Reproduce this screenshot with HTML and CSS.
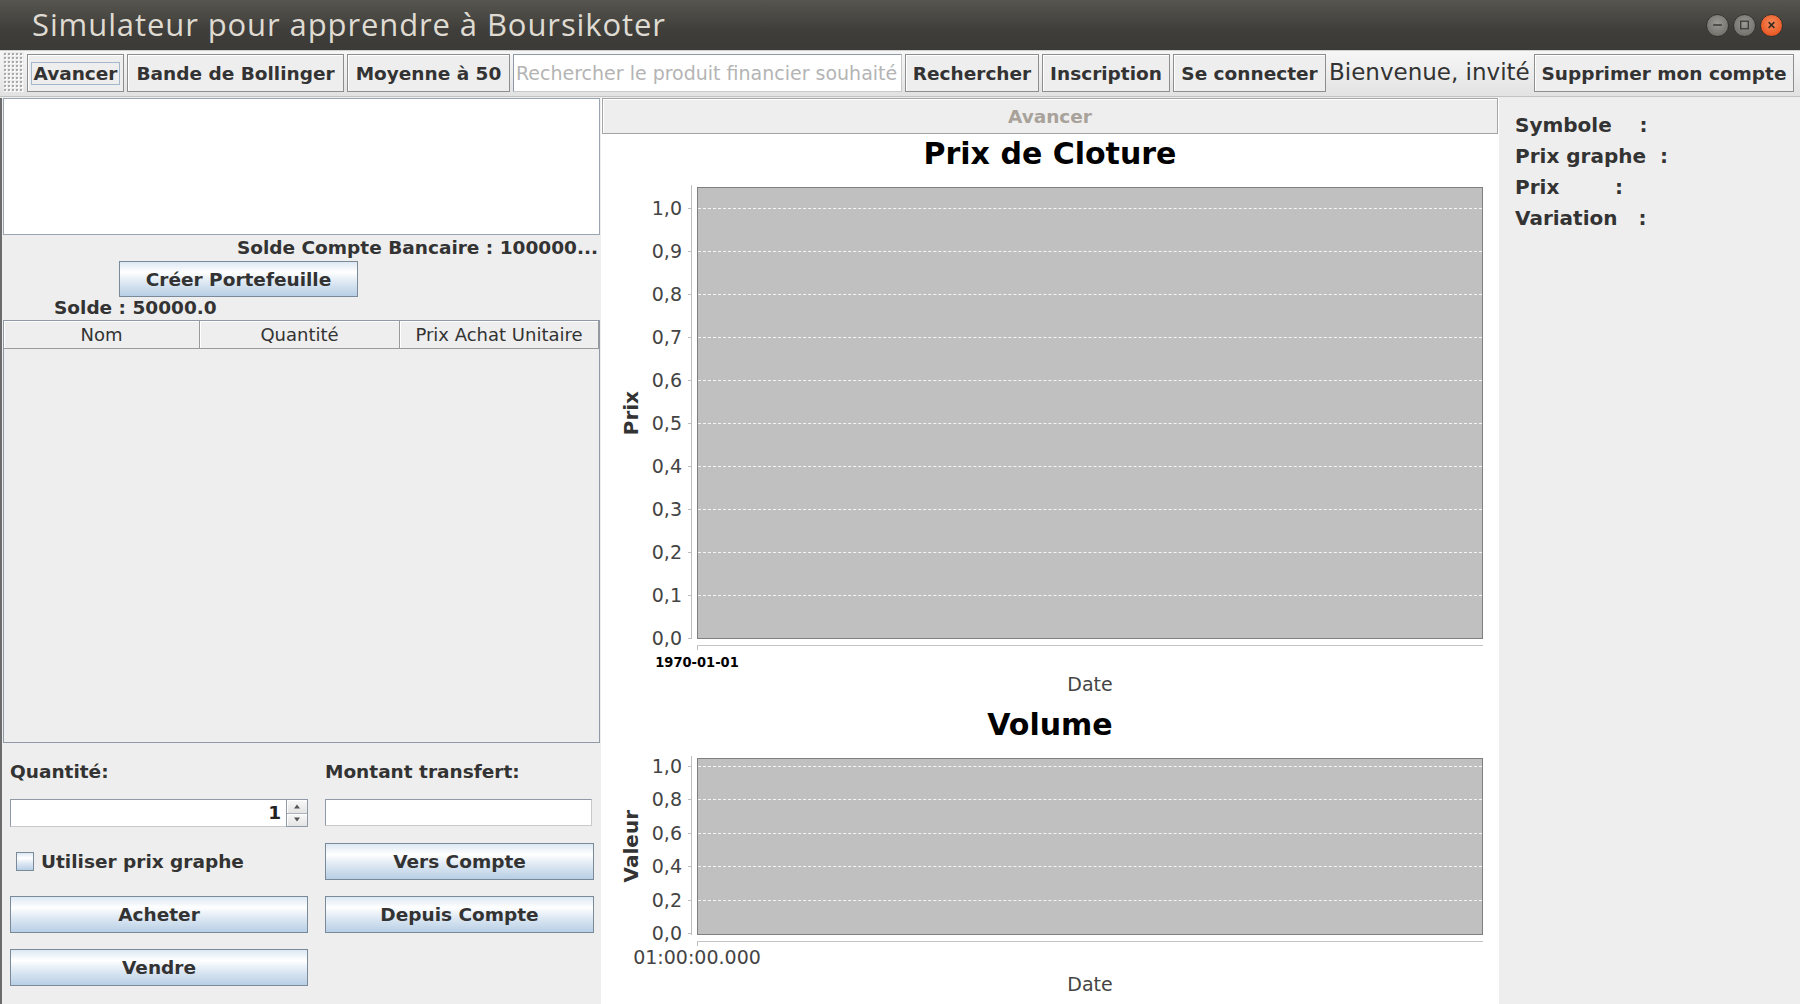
FILE: index.html
```html
<!DOCTYPE html>
<html lang="fr">
<head>
<meta charset="utf-8">
<title>Simulateur pour apprendre à Boursikoter</title>
<link rel="stylesheet" href="styles.css">
</head>
<body>
<div class="window">
  <header class="titlebar">
    <span class="title">Simulateur pour apprendre à Boursikoter</span>
    <div class="wctrls">
      <span class="wbtn wgrey"><svg viewBox="0 0 22 22" width="22" height="22"><path d="M6.5 11h9" stroke="#3a3935" stroke-width="1.6"/></svg></span>
      <span class="wbtn wgrey"><svg viewBox="0 0 22 22" width="22" height="22"><rect x="7" y="7" width="8" height="8" fill="none" stroke="#3a3935" stroke-width="1.3"/></svg></span>
      <span class="wbtn wclose"><svg viewBox="0 0 22 22" width="22" height="22"><path d="M8 8l6 6M14 8l-6 6" stroke="#3a2a20" stroke-width="1.6"/></svg></span>
    </div>
  </header>

  <nav class="toolbar">
    <span class="grip"></span>
    <button class="tb tb-avancer"><span class="focus">Avancer</span></button>
    <button class="tb tb-boll">Bande de Bollinger</button>
    <button class="tb tb-moy">Moyenne à 50</button>
    <input class="search" type="text" placeholder="Rechercher le produit financier souhaité">
    <button class="tb tb-rech">Rechercher</button>
    <button class="tb tb-insc">Inscription</button>
    <button class="tb tb-conn">Se connecter</button>
    <span class="welcome">Bienvenue, invité</span>
    <button class="tb tb-supp">Supprimer mon compte</button>
  </nav>

  <main class="main">
    <section class="left">
      <div class="notes"></div>
      <div class="bank">Solde Compte Bancaire : 100000...</div>
      <div class="create-row"><button class="mbtn create">Créer Portefeuille</button></div>
      <div class="solde">Solde : 50000.0</div>
      <div class="table">
        <div class="thead">
          <span class="th">Nom</span>
          <span class="th">Quantité</span>
          <span class="th">Prix Achat Unitaire</span>
        </div>
      </div>
      <div class="form">
        <span class="flabel">Quantité:</span>
        <span class="flabel">Montant transfert:</span>
        <div class="spinner">
          <span class="spin-field">1</span>
          <span class="spin-btns">
            <span class="spin-b"><svg viewBox="0 0 8 5" width="8" height="5"><path d="M4 0.5L7 4.5H1z" fill="#555"/></svg></span>
            <span class="spin-b"><svg viewBox="0 0 8 5" width="8" height="5"><path d="M4 4.5L7 0.5H1z" fill="#555"/></svg></span>
          </span>
        </div>
        <input class="tfield" type="text">
        <label class="check"><span class="box"></span>Utiliser prix graphe</label>
        <button class="mbtn">Vers Compte</button>
        <button class="mbtn">Acheter</button>
        <button class="mbtn">Depuis Compte</button>
        <button class="mbtn">Vendre</button>
      </div>
    </section>

    <section class="center">
      <button class="adv" disabled>Avancer</button>
      <div class="chart">
        <div class="chart-section">
          <div class="chart-title">Prix de Cloture</div>
          <div class="plot-row">
            <div class="yaxis"><span class="ylabel">Prix</span></div>
            <div class="plot plot-price">
              <span class="gridline" style="top:407px"></span>
              <span class="gridline" style="top:364px"></span>
              <span class="gridline" style="top:321px"></span>
              <span class="gridline" style="top:278px"></span>
              <span class="gridline" style="top:235px"></span>
              <span class="gridline" style="top:192px"></span>
              <span class="gridline" style="top:149px"></span>
              <span class="gridline" style="top:106px"></span>
              <span class="gridline" style="top:63px"></span>
              <span class="gridline" style="top:20px"></span>
              <span class="ytick" style="top:450px">0,0</span>
              <span class="ytick" style="top:407px">0,1</span>
              <span class="ytick" style="top:364px">0,2</span>
              <span class="ytick" style="top:321px">0,3</span>
              <span class="ytick" style="top:278px">0,4</span>
              <span class="ytick" style="top:235px">0,5</span>
              <span class="ytick" style="top:192px">0,6</span>
              <span class="ytick" style="top:149px">0,7</span>
              <span class="ytick" style="top:106px">0,8</span>
              <span class="ytick" style="top:63px">0,9</span>
              <span class="ytick" style="top:20px">1,0</span>
            </div>
          </div>
          <div class="xaxis xaxis-price"><span class="xtick xtick-date">1970-01-01</span></div>
          <div class="xtitle">Date</div>
        </div>

        <div class="chart-section second">
          <div class="chart-title">Volume</div>
          <div class="plot-row">
            <div class="yaxis"><span class="ylabel">Valeur</span></div>
            <div class="plot plot-volume">
              <span class="gridline" style="top:141px"></span>
              <span class="gridline" style="top:107px"></span>
              <span class="gridline" style="top:74px"></span>
              <span class="gridline" style="top:40px"></span>
              <span class="gridline" style="top:7px"></span>
              <span class="ytick" style="top:174px">0,0</span>
              <span class="ytick" style="top:141px">0,2</span>
              <span class="ytick" style="top:107px">0,4</span>
              <span class="ytick" style="top:74px">0,6</span>
              <span class="ytick" style="top:40px">0,8</span>
              <span class="ytick" style="top:7px">1,0</span>
            </div>
          </div>
          <div class="xaxis xaxis-volume"><span class="xtick xtick-time">01:00:00.000</span></div>
          <div class="xtitle">Date</div>
        </div>
      </div>
    </section>

    <aside class="right">
      <div class="info">Symbole    :</div>
      <div class="info">Prix graphe  :</div>
      <div class="info">Prix        :</div>
      <div class="info">Variation   :</div>
    </aside>
  </main>
</div>
</body>
</html>
```

FILE: styles.css
```css
* { box-sizing: border-box; }

html, body {
  margin: 0;
  padding: 0;
}

body {
  width: 1800px;
  height: 1004px;
  overflow: hidden;
  background: #eeeeee;
  font-family: "DejaVu Sans", "Liberation Sans", sans-serif;
  font-size: 18.5px;
  color: #333333;
}

button, input {
  font: inherit;
  color: inherit;
  margin: 0;
}

.window {
  display: flex;
  flex-direction: column;
  height: 1004px;
}

/* ---------- title bar ---------- */
.titlebar {
  height: 50px;
  flex: none;
  display: flex;
  align-items: center;
  justify-content: space-between;
  padding: 0 17px 2px 32px;
  background: linear-gradient(#56554f, #3f3e3a 60%, #3b3a36);
}

.title {
  font-family: "Open Sans", "Noto Sans", sans-serif;
  font-size: 31px;
  color: #dfdbd2;
  letter-spacing: 0.9px;
}

.wctrls {
  display: flex;
  gap: 4px;
  padding-top: 2px;
}

.wbtn {
  width: 23px;
  height: 23px;
  border-radius: 50%;
  display: flex;
  align-items: center;
  justify-content: center;
  border: 1px solid #34332f;
}

.wgrey {
  background: radial-gradient(circle at 50% 40%, #9a9994, #75746f 70%, #66655f);
}

.wclose {
  background: radial-gradient(circle at 50% 40%, #f78c5c, #ea5a25 70%, #d4461a);
}

/* ---------- tool bar ---------- */
.toolbar {
  height: 47px;
  flex: none;
  display: flex;
  align-items: flex-start;
  gap: 3px;
  padding: 3px 0 0 3px;
  background: linear-gradient(#f6f6f6, #ebebeb 60%, #e2e2e2);
  border-top: 1px solid #cfcfcf;
  border-bottom: 1px solid #c2c2c2;
}

.grip {
  width: 21px;
  height: 40px;
  margin-top: -2px;
  background-color: #ececec;
  background-image:
    radial-gradient(circle, #a9a9a9 0.9px, transparent 1.3px),
    radial-gradient(circle, #ffffff 0.9px, transparent 1.3px);
  background-size: 4px 4px, 4px 4px;
  background-position: 0 0, 1px 1px;
}

.tb {
  height: 38px;
  padding: 0;
  border: 1px solid #8e8e8e;
  box-shadow: inset 1px 1px #ffffff;
  background: #eeeeee;
  font-weight: bold;
  white-space: nowrap;
  text-align: center;
  color: #333333;
}

.tb-avancer { width: 97px; display: flex; align-items: center; justify-content: center; }
.tb-boll { width: 217px; }
.tb-moy { width: 163px; }
.tb-rech { width: 134px; }
.tb-insc { width: 128px; }
.tb-conn { width: 153px; }
.tb-supp { width: 260px; }

.focus {
  border: 1px solid #a3b8cc;
  padding: 0 1px;
  line-height: 21px;
}

.search {
  width: 389px;
  height: 38px;
  padding: 0 2px;
  border: 1px solid #8f9aa6;
  border-right-color: #c9c9c9;
  border-bottom-color: #c9c9c9;
  background: #ffffff;
  font-size: 19px;
  outline: none;
}

.search::placeholder {
  color: #b4b4b4;
}

.welcome {
  width: 202px;
  height: 38px;
  line-height: 36px;
  font-size: 23px;
  color: #333333;
  white-space: nowrap;
  overflow: hidden;
}

/* ---------- main area ---------- */
.main {
  flex: 1;
  display: flex;
  padding-top: 1px;
  min-height: 0;
}

/* left panel */
.left {
  width: 601px;
  flex: none;
  display: flex;
  flex-direction: column;
  border-left: 2px solid #6b6b6b;
}

.notes {
  margin-left: 1px;
  width: 597px;
  height: 137px;
  flex: none;
  background: #ffffff;
  border: 1px solid #9aa5b1;
}

.bank {
  margin-top: 2px;
  line-height: 22px;
  text-align: right;
  padding-right: 3px;
  font-weight: bold;
  white-space: nowrap;
}

.create-row {
  margin-top: 2px;
  height: 36px;
  padding-left: 117px;
}

.mbtn {
  height: 37px;
  padding: 0;
  border: 1px solid #7a8a99;
  background: linear-gradient(#dde8f3 0%, #ffffff 30%, #dde8f3 60%, #b8cfe5 100%);
  font-weight: bold;
  color: #333333;
  text-align: center;
  white-space: nowrap;
}

.create {
  width: 239px;
  height: 36px;
}

.solde {
  line-height: 22px;
  padding-left: 52px;
  font-weight: bold;
}

.table {
  margin: 1px 0 0 1px;
  width: 597px;
  height: 423px;
  flex: none;
  border: 1px solid #8f9aa6;
  background: #eeeeee;
}

.thead {
  display: grid;
  grid-template-columns: 196px 200px 199px;
  height: 28px;
}

.th {
  display: flex;
  align-items: center;
  justify-content: center;
  border-right: 1px solid #9a9a9a;
  border-bottom: 1px solid #9a9a9a;
  box-shadow: inset 1px 1px #ffffff;
  background: #eeeeee;
  font-size: 18px;
  white-space: nowrap;
}

.form {
  margin-top: 18px;
  padding-left: 8px;
  display: grid;
  grid-template-columns: 298px 269px;
  grid-template-rows: 22px 28px 37px 37px 37px;
  column-gap: 17px;
  row-gap: 16px;
}

.flabel {
  font-weight: bold;
  line-height: 22px;
  white-space: nowrap;
}

.spinner {
  display: flex;
  height: 28px;
}

.spin-field {
  flex: 1;
  background: #ffffff;
  border: 1px solid #8f9aa6;
  border-right: none;
  border-bottom-color: #c9c9c9;
  text-align: right;
  padding-right: 5px;
  line-height: 26px;
  font-weight: bold;
  color: #222222;
}

.spin-btns {
  width: 22px;
  display: flex;
  flex-direction: column;
  border: 1px solid #8f9aa6;
}

.spin-b {
  flex: 1;
  display: flex;
  align-items: center;
  justify-content: center;
  background: linear-gradient(#f8f8f8, #e4e4e4);
  box-shadow: inset 1px 1px #ffffff;
}

.spin-b + .spin-b {
  border-top: 1px solid #a9b2bc;
}

.tfield {
  width: 267px;
  height: 27px;
  border: 1px solid #8f9aa6;
  border-right-color: #c9c9c9;
  border-bottom-color: #c9c9c9;
  background: #ffffff;
  outline: none;
}

.check {
  display: flex;
  align-items: center;
  gap: 7px;
  padding-left: 6px;
  font-weight: bold;
  white-space: nowrap;
}

.box {
  width: 18px;
  height: 19px;
  border: 1px solid #7a8a99;
  background: linear-gradient(#dde8f3 0%, #ffffff 30%, #dde8f3 60%, #b8cfe5 100%);
}

/* center panel */
.center {
  width: 898px;
  flex: none;
  display: flex;
  flex-direction: column;
  background: #ffffff;
  padding: 0 1px;
}

.adv {
  height: 36px;
  flex: none;
  border: 1px solid #a4a4a4;
  box-shadow: inset 1px 1px #ffffff;
  background: #eeeeee;
  color: #a8a29b;
  font-weight: bold;
  text-align: center;
}

.chart {
  flex: 1;
  background: #ffffff;
}

.chart-section.second {
  margin-top: 12px;
}

.chart-title {
  margin: 2px 0 15px;
  line-height: 36px;
  font-size: 30px;
  font-weight: bold;
  color: #000000;
  text-align: center;
}

.plot-row {
  display: grid;
  grid-template-columns: 95px 786px;
}

.yaxis {
  display: flex;
  align-items: center;
  padding-left: 17px;
}

.ylabel {
  writing-mode: vertical-rl;
  transform: rotate(180deg);
  line-height: 24px;
  font-size: 20px;
  font-weight: bold;
  color: #333333;
}

.plot {
  position: relative;
  background: #c0c0c0;
  border: 1px solid #7f7f7f;
}

.plot-price { height: 452px; }
.plot-volume { height: 177px; }

.plot::before {
  content: "";
  position: absolute;
  left: -7px;
  top: -3px;
  bottom: -1px;
  width: 1px;
  background: #bdbdbd;
}

.gridline {
  position: absolute;
  left: 0;
  right: 0;
  height: 0;
  border-top: 1px dashed rgba(255, 255, 255, 0.85);
}

.ytick {
  position: absolute;
  right: calc(100% + 16px);
  transform: translateY(-50%);
  font-size: 19px;
  line-height: 20px;
  color: #444444;
  white-space: nowrap;
}

.ytick::after {
  content: "";
  position: absolute;
  left: calc(100% + 6px);
  top: 50%;
  width: 3px;
  height: 1px;
  background: #bdbdbd;
}

.xaxis {
  position: relative;
  margin: 6px 0 0 95px;
  width: 786px;
  border-top: 1px solid #c4c4c4;
}

.xaxis::before {
  content: "";
  position: absolute;
  left: 0;
  top: 0;
  width: 1px;
  height: 4px;
  background: #bdbdbd;
}

.xaxis-price { height: 28px; }
.xaxis-volume { height: 32px; }

.xtick {
  position: absolute;
  left: 0;
  transform: translateX(-50%);
  white-space: nowrap;
}

.xtick-date {
  top: 7px;
  line-height: 18px;
  font-family: "DejaVu Sans Condensed", "DejaVu Sans", sans-serif;
  font-stretch: condensed;
  font-weight: bold;
  font-size: 14.5px;
  color: #000000;
}

.xtick-time {
  top: 5px;
  line-height: 20px;
  font-size: 19px;
  color: #444444;
}

.xtitle {
  margin-left: 95px;
  width: 786px;
  text-align: center;
  line-height: 22px;
  font-size: 19px;
  color: #444444;
}

/* right panel */
.right {
  flex: 1;
  padding: 12px 0 0 16px;
  background: #eeeeee;
}

.info {
  font-size: 20px;
  font-weight: bold;
  line-height: 31px;
  white-space: pre;
}
```
